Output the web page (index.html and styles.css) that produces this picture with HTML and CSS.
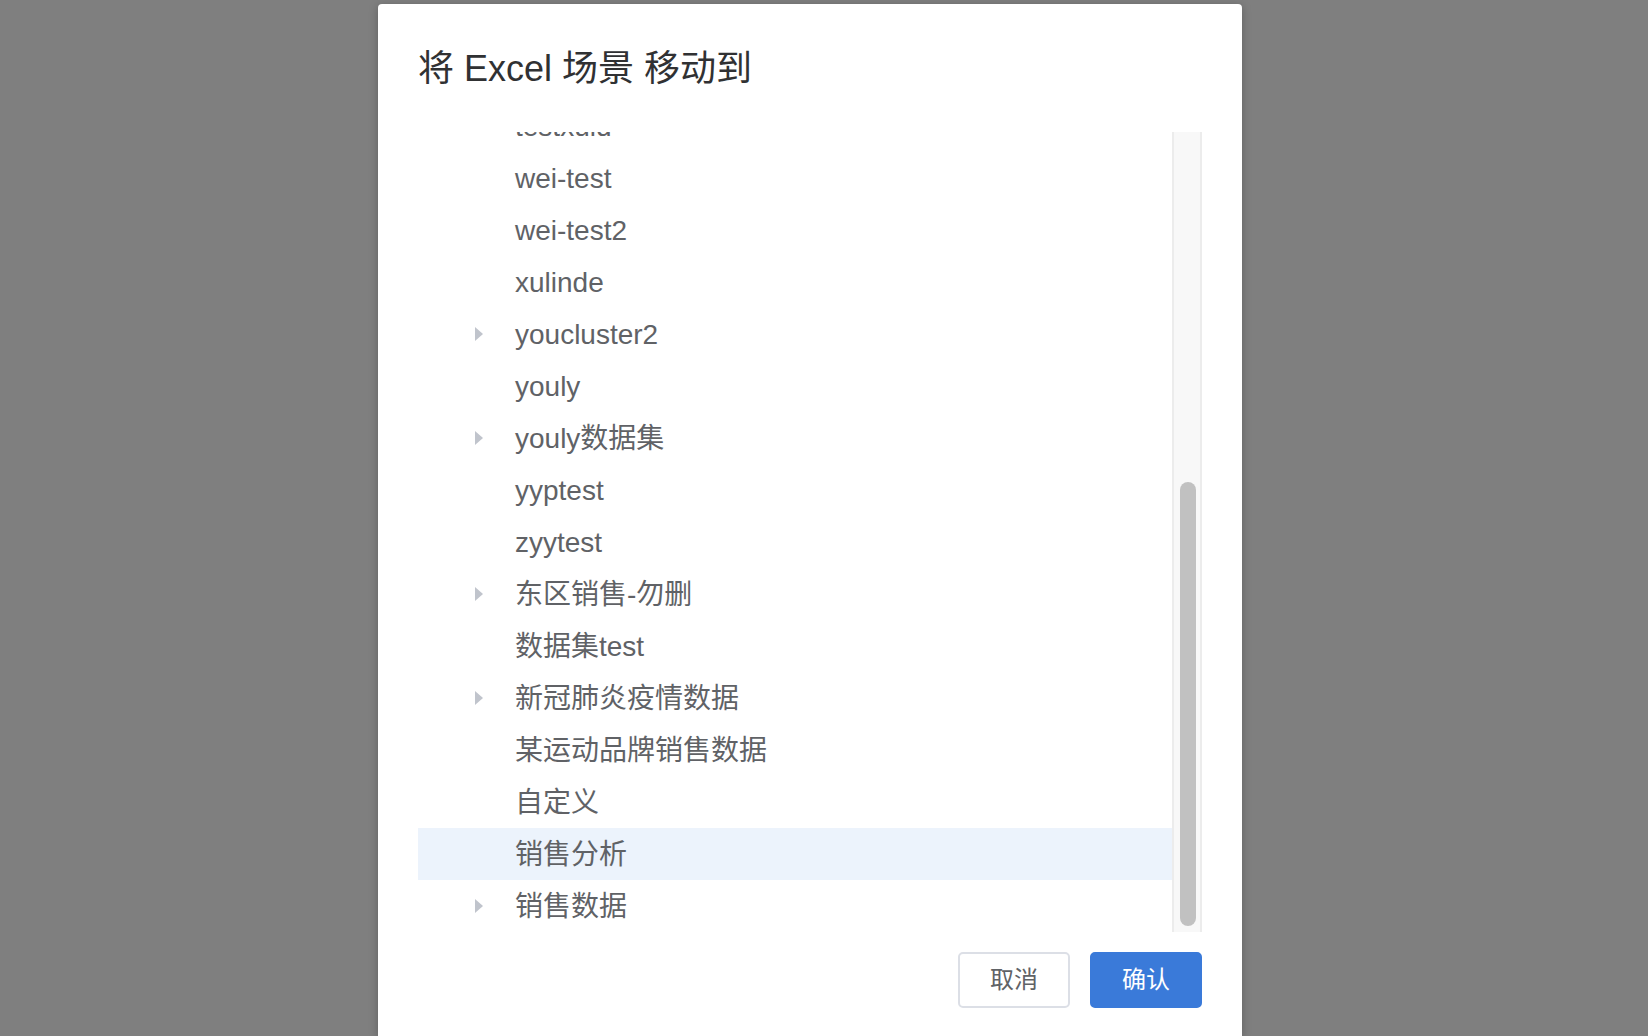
FILE: index.html
```html
<!DOCTYPE html>
<html lang="zh-CN">
<head>
<meta charset="utf-8">
<title>将 Excel 场景 移动到</title>
<link rel="stylesheet" href="styles.css">
</head>
<body>
<div class="overlay">
  <div class="dialog">
    <div class="dialog-header">
      <h2 class="dialog-title">将 Excel 场景 移动到</h2>
    </div>
    <div class="dialog-body">
      <div class="tree-viewport">
        <ul class="tree">
          <li class="node"><span class="caret-space"></span><span class="label">testxuid</span></li>
          <li class="node"><span class="caret-space"></span><span class="label">wei-test</span></li>
          <li class="node"><span class="caret-space"></span><span class="label">wei-test2</span></li>
          <li class="node"><span class="caret-space"></span><span class="label">xulinde</span></li>
          <li class="node"><span class="caret"></span><span class="label">youcluster2</span></li>
          <li class="node"><span class="caret-space"></span><span class="label">youly</span></li>
          <li class="node"><span class="caret"></span><span class="label">youly数据集</span></li>
          <li class="node"><span class="caret-space"></span><span class="label">yyptest</span></li>
          <li class="node"><span class="caret-space"></span><span class="label">zyytest</span></li>
          <li class="node"><span class="caret"></span><span class="label">东区销售-勿删</span></li>
          <li class="node"><span class="caret-space"></span><span class="label">数据集test</span></li>
          <li class="node"><span class="caret"></span><span class="label">新冠肺炎疫情数据</span></li>
          <li class="node"><span class="caret-space"></span><span class="label">某运动品牌销售数据</span></li>
          <li class="node"><span class="caret-space"></span><span class="label">自定义</span></li>
          <li class="node is-current"><span class="caret-space"></span><span class="label">销售分析</span></li>
          <li class="node"><span class="caret"></span><span class="label">销售数据</span></li>
        </ul>
      </div>
      <div class="scrollbar">
        <div class="scrollbar-thumb"></div>
      </div>
    </div>
    <div class="dialog-footer">
      <button class="btn btn-default">取消</button>
      <button class="btn btn-primary">确认</button>
    </div>
  </div>
</div>
</body>
</html>
```
FILE: styles.css
```css
html, body {
  margin: 0;
  padding: 0;
  height: 100%;
  overflow: hidden;
}
body {
  background: #7f7f7f;
  font-family: "Liberation Sans", "Noto Sans CJK SC", sans-serif;
}
.overlay {
  height: 100%;
  display: flex;
  align-items: stretch;
  padding-top: 4px;
  padding-left: 378px;
  box-sizing: border-box;
}
.dialog {
  width: 864px;
  background: #ffffff;
  border-radius: 4px 4px 0 0;
  box-shadow: 0 2px 10px rgba(0, 0, 0, 0.25);
  display: flex;
  flex-direction: column;
  flex-shrink: 0;
}
.dialog-header {
  padding: 42px 40px 0 40px;
}
.dialog-title {
  margin: 0;
  font-size: 36px;
  line-height: 46px;
  font-weight: normal;
  color: #303133;
}
.dialog-body {
  margin: 40px 40px 0 40px;
  height: 800px;
  display: flex;
}
.tree-viewport {
  flex: 1;
  overflow: hidden;
}
.tree {
  list-style: none;
  margin: -32px 0 0 0;
  padding: 0;
}
.node {
  height: 52px;
  display: flex;
  align-items: flex-start;
  padding-left: 57px;
  font-size: 28px;
  color: #606266;
}
.node.is-current {
  background: #ecf3fc;
}
.caret,
.caret-space {
  width: 8px;
  height: 14px;
  flex-shrink: 0;
  margin-right: 32px;
  margin-top: 19px;
  box-sizing: border-box;
}
.caret {
  width: 0;
  height: 0;
  border-left: 8px solid #c0c4cc;
  border-top: 7px solid transparent;
  border-bottom: 7px solid transparent;
}
.label {
  white-space: nowrap;
  padding-top: 2px;
  line-height: 50px;
}
.scrollbar {
  width: 30px;
  background: #f8f8f8;
  border-left: 2px solid #ececec;
  border-right: 2px solid #ececec;
  box-sizing: border-box;
  padding: 350px 0 6px 6px;
}
.scrollbar-thumb {
  width: 16px;
  height: 444px;
  border-radius: 8px;
  background: #c1c1c1;
}
.dialog-footer {
  display: flex;
  justify-content: flex-end;
  gap: 20px;
  padding: 20px 40px 0 40px;
}
.btn {
  width: 112px;
  height: 56px;
  padding: 0 0 5px 0;
  border-radius: 5px;
  font-family: "Liberation Sans", "Noto Sans CJK SC", sans-serif;
  font-size: 24px;
  cursor: pointer;
  box-sizing: border-box;
}
.btn-default {
  background: #ffffff;
  border: 2px solid #dcdfe6;
  color: #606266;
}
.btn-primary {
  background: #3a7ad9;
  border: 2px solid #3a7ad9;
  color: #ffffff;
}
```
